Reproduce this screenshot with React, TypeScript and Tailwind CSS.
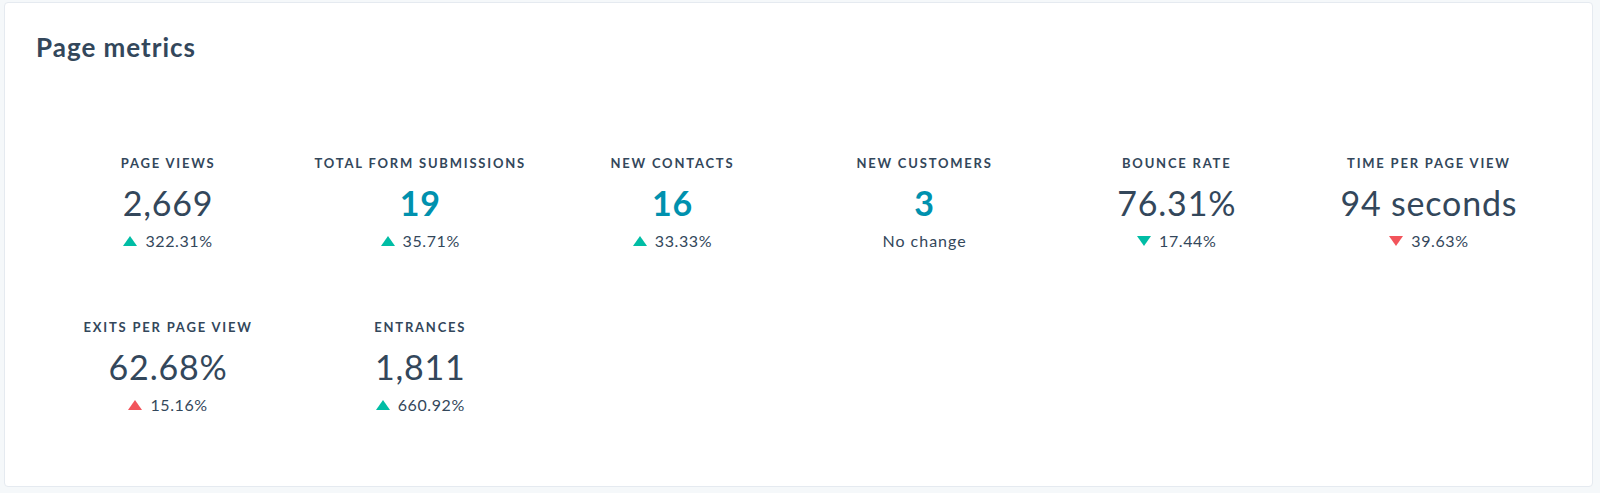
import React from 'react';

type Metric = {
  label: string;
  value: string;
  highlight?: boolean;
  change?: string;
  dir?: 'up' | 'down';
  good?: boolean;
};

const metrics: Metric[] = [
  { label: 'PAGE VIEWS', value: '2,669', change: '322.31%', dir: 'up', good: true },
  { label: 'TOTAL FORM SUBMISSIONS', value: '19', highlight: true, change: '35.71%', dir: 'up', good: true },
  { label: 'NEW CONTACTS', value: '16', highlight: true, change: '33.33%', dir: 'up', good: true },
  { label: 'NEW CUSTOMERS', value: '3', highlight: true },
  { label: 'BOUNCE RATE', value: '76.31%', change: '17.44%', dir: 'down', good: true },
  { label: 'TIME PER PAGE VIEW', value: '94 seconds', change: '39.63%', dir: 'down', good: false },
  { label: 'EXITS PER PAGE VIEW', value: '62.68%', change: '15.16%', dir: 'up', good: false },
  { label: 'ENTRANCES', value: '1,811', change: '660.92%', dir: 'up', good: true },
];

const Triangle: React.FC<{ dir: 'up' | 'down'; good: boolean }> = ({ dir, good }) => (
  <svg width="14" height="10" viewBox="0 0 14 10" className={good ? 'text-[#00bda5]' : 'text-[#f2545b]'}>
    {dir === 'up' ? <path d="M7 0 L14 10 L0 10 Z" fill="currentColor" /> : <path d="M0 0 L14 0 L7 10 Z" fill="currentColor" />}
  </svg>
);

const MetricCell: React.FC<{ m: Metric }> = ({ m }) => (
  <div className="flex flex-col items-center">
    <div className="text-[13px] leading-[18px] font-bold tracking-[1.8px] text-[#33475b]">{m.label}</div>
    <div
      className={`mt-[10px] text-[34px] leading-[42px] tracking-[0.8px] ${
        m.highlight ? 'font-bold text-[#0091ae]' : 'font-normal text-[#33475b]'
      }`}
    >
      {m.value}
    </div>
    <div className="mt-[6px] flex items-center gap-[8px] text-[16px] leading-[22px] tracking-[0.6px] text-[#33475b]">
      {m.change ? (
        <>
          <Triangle dir={m.dir!} good={!!m.good} />
          <span>{m.change}</span>
        </>
      ) : (
        <span className="tracking-[1px]">No change</span>
      )}
    </div>
  </div>
);

export default function App() {
  return (
    <div className="w-[1600px] h-[493px] bg-[#f5f8fa] pt-[2px] pl-[4px] font-['Lato',sans-serif]">
      <div className="w-[1589px] h-[485px] bg-white border border-[#e5eaf0] rounded-[4px] pt-[27px]">
        <h2 className="pl-[31px] text-[26px] leading-[34px] font-bold tracking-[1px] text-[#33475b]">Page metrics</h2>
        <div className="mt-[90px] px-[37px] grid grid-cols-6 gap-y-[66px]">
          {metrics.map((m) => (
            <MetricCell key={m.label} m={m} />
          ))}
        </div>
      </div>
    </div>
  );
}
